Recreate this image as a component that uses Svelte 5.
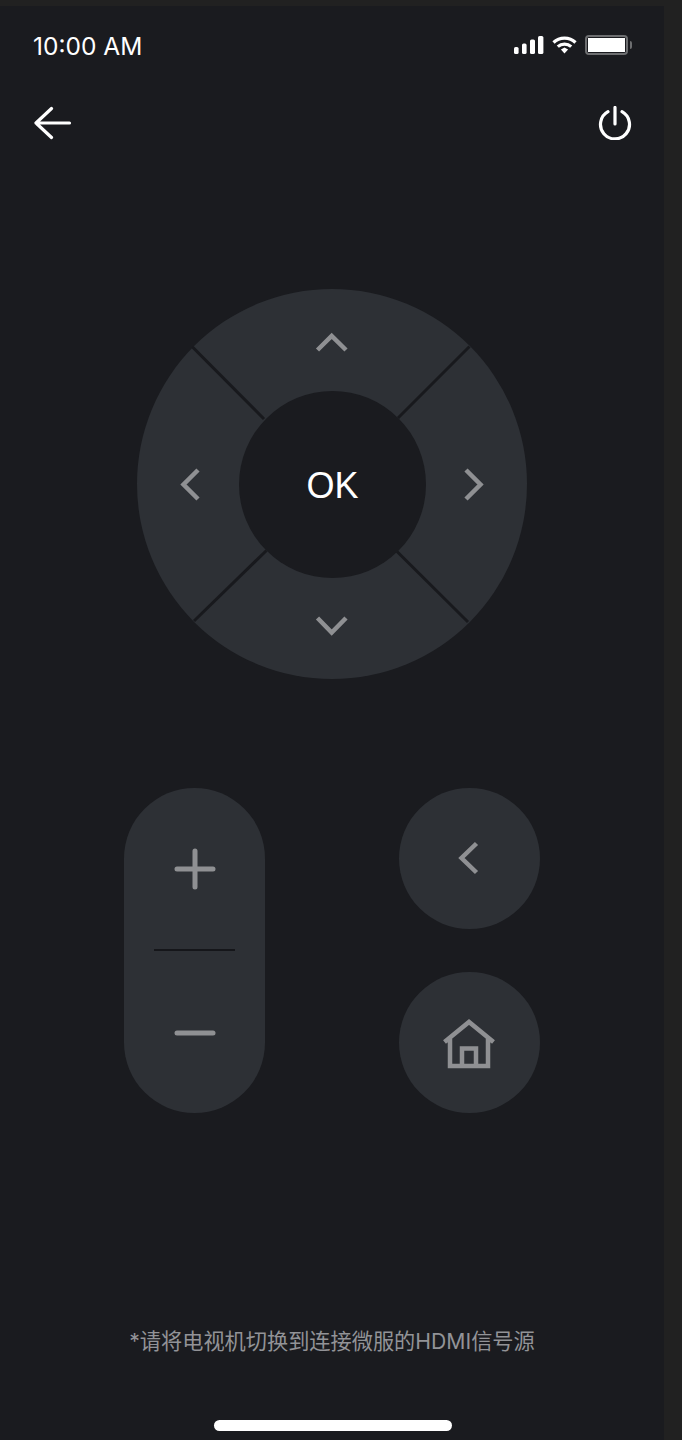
<script>
  const dividers = [
    [192.5, 348, 264, 420],
    [469.5, 347.5, 398, 419],
    [194, 622, 266.5, 551.5],
    [468, 623, 397, 552.5]
  ];
  const chevrons = [
    '317.5,351 331.7,337 346,351',
    '198,471 183.5,485.5 198,500',
    '466,471 480.5,485.5 466,500',
    '317.5,619 331.7,633.5 346,619'
  ];
</script>

<div class="frame">
  <header class="status">
    <span class="time">10:00 AM</span>
    <div class="indicators">
      <svg class="signal" width="30" height="18" viewBox="0 0 30 18" aria-hidden="true">
        <rect x="0" y="11" width="4.6" height="7" rx="1.6" />
        <rect x="8" y="7.5" width="4.6" height="10.5" rx="1.6" />
        <rect x="16" y="3.5" width="5" height="14.5" rx="1.6" />
        <rect x="24" y="0" width="5.4" height="18" rx="1.6" />
      </svg>
      <svg class="wifi" width="25" height="18" viewBox="0 0 25 18" aria-hidden="true">
        <path d="M1.5 6.5 C7.5 0.6 17.5 0.6 23.5 6.5" />
        <path d="M5.8 10.6 C9.6 7.2 15.4 7.2 19.2 10.6" />
        <polygon class="tip" points="8.9,13.5 12.5,11.4 16.1,13.5 12.5,17.4" />
      </svg>
      <div class="battery">
        <div class="cell"><div class="charge"></div></div>
        <div class="nub"></div>
      </div>
    </div>
  </header>

  <nav class="nav">
    <svg width="38" height="34" viewBox="0 0 38 34" aria-label="返回">
      <path d="M2 17 H35.5 M17.5 2.5 L2 17 L17.5 31.5" />
    </svg>
    <svg width="34" height="34" viewBox="0 0 34 34" aria-label="电源">
      <path d="M17 1.5 V18 M10 5.7 A14.5 14.5 0 1 0 24 5.7" />
    </svg>
  </nav>

  <section class="dpad">
    <svg class="ring" width="390" height="390" viewBox="137 290 390 390" aria-hidden="true">
      <circle cx="332" cy="485" r="195" class="pad" />
      {#each dividers as d}
        <line x1={d[0]} y1={d[1]} x2={d[2]} y2={d[3]} class="divider" />
      {/each}
      {#each chevrons as points}
        <polyline {points} class="chev" />
      {/each}
    </svg>
    <div class="ok">OK</div>
  </section>

  <section class="controls">
    <div class="volume">
      <div class="vol-key">
        <svg width="44" height="44" viewBox="0 0 44 44" aria-label="音量加">
          <path d="M4 22 H40 M22 4 V40" />
        </svg>
      </div>
      <div class="vol-line"></div>
      <div class="vol-key minus">
        <svg width="44" height="8" viewBox="0 0 44 8" aria-label="音量减">
          <path d="M4 4 H40" />
        </svg>
      </div>
    </div>
    <div class="round-keys">
      <div class="round">
        <svg class="back" width="24" height="34" viewBox="0 0 24 34" aria-label="后退">
          <polyline points="20.5,2.5 5.5,17 20.5,31.5" />
        </svg>
      </div>
      <div class="round">
        <svg class="home" width="52" height="50" viewBox="0 0 52 50" aria-label="主页">
          <path d="M1.5 23 L26 3 L50.5 23 M7 18.5 V47 H45 V18.5 M19 47 V29.5 H33 V47" />
        </svg>
      </div>
    </div>
  </section>

  <p class="hint">*请将电视机切换到连接微服的HDMI信号源</p>
  <div class="home-bar"></div>
</div>

<style>
  :global(body) {
    margin: 0;
    background: #212121;
  }

  .frame {
    box-sizing: border-box;
    width: 664px;
    height: 1434px;
    margin-top: 6px;
    background: #1a1b1f;
    display: flex;
    flex-direction: column;
    font-family: Inter, "Noto Sans CJK SC", sans-serif;
    overflow: hidden;
  }

  .status {
    height: 78px;
    flex: none;
    box-sizing: border-box;
    padding: 0 32px 0 33px;
    display: flex;
    align-items: center;
    justify-content: space-between;
  }

  .time {
    color: #fff;
    font-size: 24.5px;
    line-height: 32px;
    padding-top: 1px;
  }

  .indicators {
    display: flex;
    align-items: center;
    gap: 8px;
  }

  .signal rect {
    fill: #fff;
  }

  .wifi path {
    fill: none;
    stroke: #fff;
    stroke-width: 3.2;
  }

  .wifi .tip {
    fill: #fff;
  }

  .battery {
    display: flex;
    align-items: center;
    gap: 2px;
  }

  .cell {
    box-sizing: border-box;
    width: 43px;
    height: 20px;
    padding: 1px;
    border: 2px solid #6d6e70;
    border-radius: 4px;
  }

  .charge {
    height: 100%;
    background: #fff;
  }

  .nub {
    width: 2px;
    height: 8px;
    background: #6d6e70;
    border-radius: 0 2px 2px 0;
  }

  .nav {
    height: 78px;
    flex: none;
    box-sizing: border-box;
    padding: 0 32.5px 0 34px;
    display: flex;
    align-items: center;
    justify-content: space-between;
  }

  .nav svg {
    display: block;
  }

  .nav path {
    fill: none;
    stroke: #fff;
    stroke-width: 3.2;
    stroke-linecap: round;
    stroke-linejoin: round;
  }

  .dpad {
    flex: none;
    width: 390px;
    height: 390px;
    margin: 127px auto 0;
    display: grid;
    place-items: center;
  }

  .dpad > * {
    grid-area: 1 / 1;
  }

  .ring {
    display: block;
  }

  .pad {
    fill: #2d3035;
  }

  .divider {
    stroke: #18191d;
    stroke-width: 3;
  }

  .chev {
    fill: none;
    stroke: #8f9093;
    stroke-width: 4.5;
  }

  .ok {
    width: 187px;
    height: 187px;
    border-radius: 50%;
    background: #1a1b1f;
    color: #fff;
    font-family: "Liberation Sans", sans-serif;
    font-size: 36px;
    line-height: 1;
    padding-top: 3px;
    padding-left: 1px;
    box-sizing: border-box;
    display: flex;
    align-items: center;
    justify-content: center;
    position: relative;
  }

  .controls {
    flex: none;
    margin-top: 108.5px;
    display: flex;
    justify-content: center;
    gap: 133.5px;
  }

  .volume {
    width: 141px;
    height: 325.5px;
    border-radius: 71px;
    background: #2d3035;
    display: flex;
    flex-direction: column;
    align-items: center;
  }

  .vol-key {
    height: 161.5px;
    box-sizing: border-box;
    padding-top: 59.5px;
    display: flex;
    justify-content: center;
  }

  .vol-key.minus {
    padding-top: 78px;
  }

  .vol-key svg {
    display: block;
  }

  .vol-key path {
    fill: none;
    stroke: #8f9093;
    stroke-width: 5;
    stroke-linecap: round;
  }

  .vol-line {
    width: 81px;
    height: 2px;
    background: #15161a;
    flex: none;
  }

  .round-keys {
    display: flex;
    flex-direction: column;
    gap: 42.5px;
  }

  .round {
    width: 141.5px;
    height: 141.5px;
    border-radius: 50%;
    background: #2d3035;
    display: flex;
    align-items: center;
    justify-content: center;
  }

  .back {
    display: block;
    margin-right: 3px;
  }

  .back polyline {
    fill: none;
    stroke: #8f9093;
    stroke-width: 4.5;
  }

  .home {
    display: block;
    margin-top: 3px;
  }

  .home path {
    fill: none;
    stroke: #8f9093;
    stroke-width: 4.5;
  }

  .hint {
    margin: 213.5px 0 0;
    height: 28px;
    color: #929397;
    font-size: 21.2px;
    line-height: 28px;
    text-align: center;
    white-space: nowrap;
  }

  .home-bar {
    flex: none;
    width: 238px;
    height: 11px;
    margin: 65px 0 0 214px;
    background: #fff;
    border-radius: 6px;
  }
</style>
